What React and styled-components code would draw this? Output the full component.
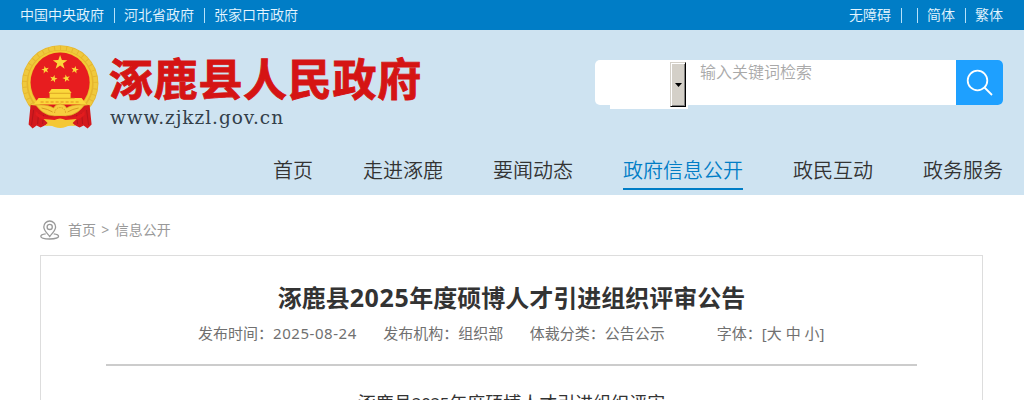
import React from 'react';
import styled, { createGlobalStyle } from 'styled-components';

const GlobalStyle = createGlobalStyle`
* {
  box-sizing: border-box;
}
body {
  margin: 0;
  height: 400px;
  overflow: hidden;
  background: #ffffff;
  font-family: 'Noto Sans', 'Noto Sans CJK SC', sans-serif;
  color: #333333;
}
a {
  color: inherit;
  text-decoration: none;
}
`;

const Page = styled.div`
  width: 1024px;
  height: 400px;
  overflow: hidden;
`;

const TopBar = styled.div`
  display: flex;
  justify-content: space-between;
  height: 30px;
  padding: 0 21px 0 20px;
  background: #007dc6;
  color: #e6f6ff;
  font-family: 'Noto Sans CJK SC', sans-serif;
  font-weight: 350;
  font-size: 14px;
  line-height: 29px;
`;

const TopLinks = styled.div`
  display: flex;
`;

const Divider = styled.span`
  width: 1px;
  height: 15px;
  margin: 8px 9.5px 0 9.5px;
  background: #b5e1fa;
`;

const EmptyLink = styled.span`
  width: ${(props) => props.$width}px;
  margin-right: -5px;
`;

const Header = styled.header`
  height: 165px;
  background: #cee3f1;
`;

const Banner = styled.div`
  display: flex;
  justify-content: space-between;
  height: 117px;
  padding: 15px 21px 0 21px;
`;

const Brand = styled.div`
  display: flex;
`;

const BrandText = styled.div`
  padding: 7px 0 0 8px;
`;

const BrandName = styled.div`
  font-family: 'Noto Sans CJK SC', sans-serif;
  font-size: 44px;
  font-weight: 700;
  line-height: 50px;
  letter-spacing: 0.7px;
  color: #d51414;
  -webkit-text-stroke: 0.9px #d51414;
  white-space: nowrap;
`;

const BrandUrl = styled.div`
  font-family: 'DejaVu Serif', serif;
  font-size: 18.5px;
  line-height: 22px;
  letter-spacing: 0.95px;
  color: #334049;
  margin: 5px 0 0 1px;
`;

const SearchBox = styled.div`
  display: flex;
  width: 408px;
  height: 45px;
  margin-top: 15px;
  border-radius: 5px;
  background: #ffffff;
`;

const TypeSelect = styled.div`
  display: flex;
  justify-content: flex-end;
  width: 78px;
  height: 49px;
  margin-left: 15px;
  padding: 2px 2px 2px 0;
  background: #ffffff;
`;

const SelectArrow = styled.div`
  display: flex;
  align-items: center;
  justify-content: center;
  width: 16px;
  height: 45px;
  background: #d4d0c8;
  border: 1px solid;
  border-color: #d4d0c8 #000000 #000000 #d4d0c8;
  box-shadow: inset 1px 1px 0 #ffffff, inset -1px -1px 0 #808080;
`;

const SearchInput = styled.div`
  flex: 1;
  padding-left: 12px;
  font-family: 'Noto Sans CJK SC', sans-serif;
  font-size: 16px;
  font-weight: 350;
  line-height: 22px;
  color: #a9a9a9;
`;

const SearchButton = styled.div`
  display: flex;
  align-items: center;
  justify-content: center;
  width: 47px;
  height: 45px;
  border-radius: 0 5px 5px 0;
  background: #1ea0ff;
`;

const Nav = styled.nav`
  display: flex;
  justify-content: flex-end;
  gap: 50px;
  padding: 6px 21px 0 0;
`;

const NavItem = styled.a`
  height: 37px;
  font-family: 'Noto Sans CJK SC', sans-serif;
  font-size: 20px;
  font-weight: 350;
  line-height: 34px;
  color: ${(props) => (props.$active ? '#007dc6' : '#333333')};
  border-bottom: 2px solid ${(props) => (props.$active ? '#007dc6' : 'transparent')};
`;

const Crumbs = styled.div`
  display: flex;
  align-items: center;
  height: 60px;
  padding: 10px 0 0 40px;
  font-size: 14px;
  line-height: 20px;
  color: #999999;
`;

const CrumbText = styled.span`
  margin-left: 8px;
  white-space: pre;
  word-spacing: 1.7px;
`;

const Article = styled.article`
  width: 943px;
  height: 160px;
  margin-left: 40px;
  padding: 23px 65px 0 65px;
  border: 1px solid #dddddd;
`;

const Title = styled.h1`
  margin: 0;
  font-size: 24px;
  font-weight: 700;
  line-height: 38px;
  text-align: center;
  white-space: nowrap;
`;

const Digits = styled.span`
  font-size: ${(props) => props.$size || 'inherit'};
  line-height: 1;
  letter-spacing: ${(props) => props.$spacing}px;
`;

const Meta = styled.div`
  display: flex;
  height: 49px;
  padding-left: 92px;
  border-bottom: 2px solid #cccccc;
  font-size: 15px;
  line-height: 32px;
  color: #707070;
  white-space: nowrap;
`;

const MetaItem = styled.span`
  margin-right: ${(props) => props.$gap || 0}px;
`;

const Content = styled.p`
  margin: 22px 0 0 0;
  font-size: 18px;
  line-height: 30px;
  text-align: center;
`;

const STAR = 'M0 -1 L.235 -.324 L.951 -.309 L.38 .124 L.588 .809 L0 .4 L-.588 .809 L-.38 .124 L-.951 -.309 L-.235 -.324Z';

const Emblem = () => (
  <svg width="80" height="86" viewBox="0.400 0 80 86">
    <ellipse cx="39.500" cy="38.500" rx="38.300" ry="38.300" fill="#e6b62e" />
    <ellipse cx="39.500" cy="38.500" rx="35.500" ry="35.500" fill="none" stroke="#efc93d" strokeWidth="4" strokeDasharray="5 1" />
    <ellipse cx="39.500" cy="38" rx="31" ry="31.500" fill="none" stroke="#f3cb35" strokeWidth="2" />
    <ellipse cx="39.500" cy="37.500" rx="29.500" ry="30" fill="#e71d1f" />
    <g fill="#fbd83b">
      <path d={STAR} transform="translate(39.5 17.5) scale(7.6)" />
      <path d={STAR} transform="translate(24.7 24.8) rotate(-12) scale(4)" />
      <path d={STAR} transform="translate(54.3 24.8) rotate(12) scale(4)" />
      <path d={STAR} transform="translate(33 33.8) rotate(14) scale(4)" />
      <path d={STAR} transform="translate(45.8 33.4) rotate(-14) scale(4)" />
      <path d="M31 44h17l3 4h-23zM29 48h21v5h-21zM18 53h43l5 6.500h-53z" />
    </g>
    <path d="M29 48.300h21M25 53.300h29" stroke="#d79a20" strokeWidth="0.8" />
    <path d="M20 57h40" stroke="#e68b1e" strokeWidth="1.200" strokeDasharray="3 2" />
    <path d="M10 60l5 .5h49l5 -.5l2 19.500l-4 4l-4 -3l-4 2l-6 -3h-27l-6 3l-4 -2l-4 3l-4 -4z" fill="#d4191d" />
    <path d="M13 65l-2 15M18 68l-1 11M23 70l-1 9M66 65l2 15M61 68l1 11M56 70l1 9" stroke="#b5151b" strokeWidth="1" fill="none" />
    <path d="M15 60q12 -1 18 3q2 -4 6.500 -4t6.500 4q6 -4 18 -3q-6 8 -13 10l-6 1h-11l-6 -1q-7 -2 -13 -10z" fill="#f7cd3f" stroke="#d99c20" strokeWidth="0.700" />
    <path d="M21 63q6 1 11 4M58 63q-6 1 -11 4" stroke="#d99c20" strokeWidth="1" fill="none" />
    <path d="M34 68a5.500 5.500 0 0 1 11 0" fill="none" stroke="#d99c20" strokeWidth="1" strokeDasharray="1.500 1" />
    <path d="M15 66q10 9 18 6q6.500 -2 13 0q8 3 18 -6v4q-9 8 -18 5.500q-6.500 -2 -13 0q-9 2.500 -18 -5.500z" fill="#e31c1e" />
    <path d="M23 74l11 1q5.500 -3 11 0l11 -1l-4 4l3 3q-7 -1 -10 1q-5 2 -11 0q-3 -2 -10 -1l3 -3z" fill="#f4c735" />
  </svg>
);

const SearchIcon = () => (
  <svg width="28" height="28" viewBox="0 0 28 28" fill="none" stroke="#ffffff" strokeWidth="1.8">
    <circle cx="11.500" cy="11.500" r="9.800" />
    <path d="M18.500 18.500l7.500 7.500" />
  </svg>
);

const LocationIcon = () => (
  <svg width="20" height="20" viewBox="0 0 20 20" fill="none" stroke="#999999" strokeWidth="1.3">
    <path d="M9.700 16.500C7.500 13.500 3.800 10.500 3.800 6.900a5.900 5.900 0 0 1 11.800 0C15.600 10.500 11.900 13.500 9.700 16.500z" />
    <circle cx="9.700" cy="6.900" r="2.600" />
    <path d="M5.700 13.800C2.500 14.200 .8 15 .8 16.200c0 1.700 4 2.800 8.900 2.800s8.900-1.100 8.900-2.800c0-1.200-1.700-2-4.900-2.400" />
  </svg>
);

const navItems = ['首页', '走进涿鹿', '要闻动态', '政府信息公开', '政民互动', '政务服务'];

const App = () => {
  return (
    <Page>
      <GlobalStyle />
      <TopBar>
        <TopLinks>
          <a>中国中央政府</a>
          <Divider />
          <a>河北省政府</a>
          <Divider />
          <a>张家口市政府</a>
        </TopLinks>
        <TopLinks>
          <a>无障碍</a>
          <Divider />
          <EmptyLink $width={1} />
          <Divider />
          <a>简体</a>
          <Divider />
          <a>繁体</a>
        </TopLinks>
      </TopBar>
      <Header>
        <Banner>
          <Brand>
            <Emblem />
            <BrandText>
              <BrandName>涿鹿县人民政府</BrandName>
              <BrandUrl>www.zjkzl.gov.cn</BrandUrl>
            </BrandText>
          </Brand>
          <SearchBox>
            <TypeSelect>
              <SelectArrow>
                <svg width="7" height="4" viewBox="0 0 7 4">
                  <path d="M0 0h7L3.500 4z" fill="#000000" />
                </svg>
              </SelectArrow>
            </TypeSelect>
            <SearchInput>输入关键词检索</SearchInput>
            <SearchButton>
              <SearchIcon />
            </SearchButton>
          </SearchBox>
        </Banner>
        <Nav>
          {navItems.map((item) => (
            <NavItem key={item} $active={item === '政府信息公开'}>{item}</NavItem>
          ))}
        </Nav>
      </Header>
      <Crumbs>
        <LocationIcon />
        <CrumbText>首页 &gt; 信息公开</CrumbText>
      </Crumbs>
      <Article>
        <Title>涿鹿县<Digits $size="25px" $spacing={0.6}>2025</Digits>年度硕博人才引进组织评审公告</Title>
        <Meta>
          <MetaItem $gap={26.5}>发布时间：<Digits $spacing={0.55}>2025-08-24</Digits></MetaItem>
          <MetaItem $gap={26.5}>发布机构：组织部</MetaItem>
          <MetaItem $gap={52}>体裁分类：公告公示</MetaItem>
          <MetaItem>字体：[大 中 小]</MetaItem>
        </Meta>
        <Content>涿鹿县<Digits $size="17px" $spacing={-0.4}>2025</Digits>年度硕博人才引进组织评审</Content>
      </Article>
    </Page>
  );
};

export default App;
